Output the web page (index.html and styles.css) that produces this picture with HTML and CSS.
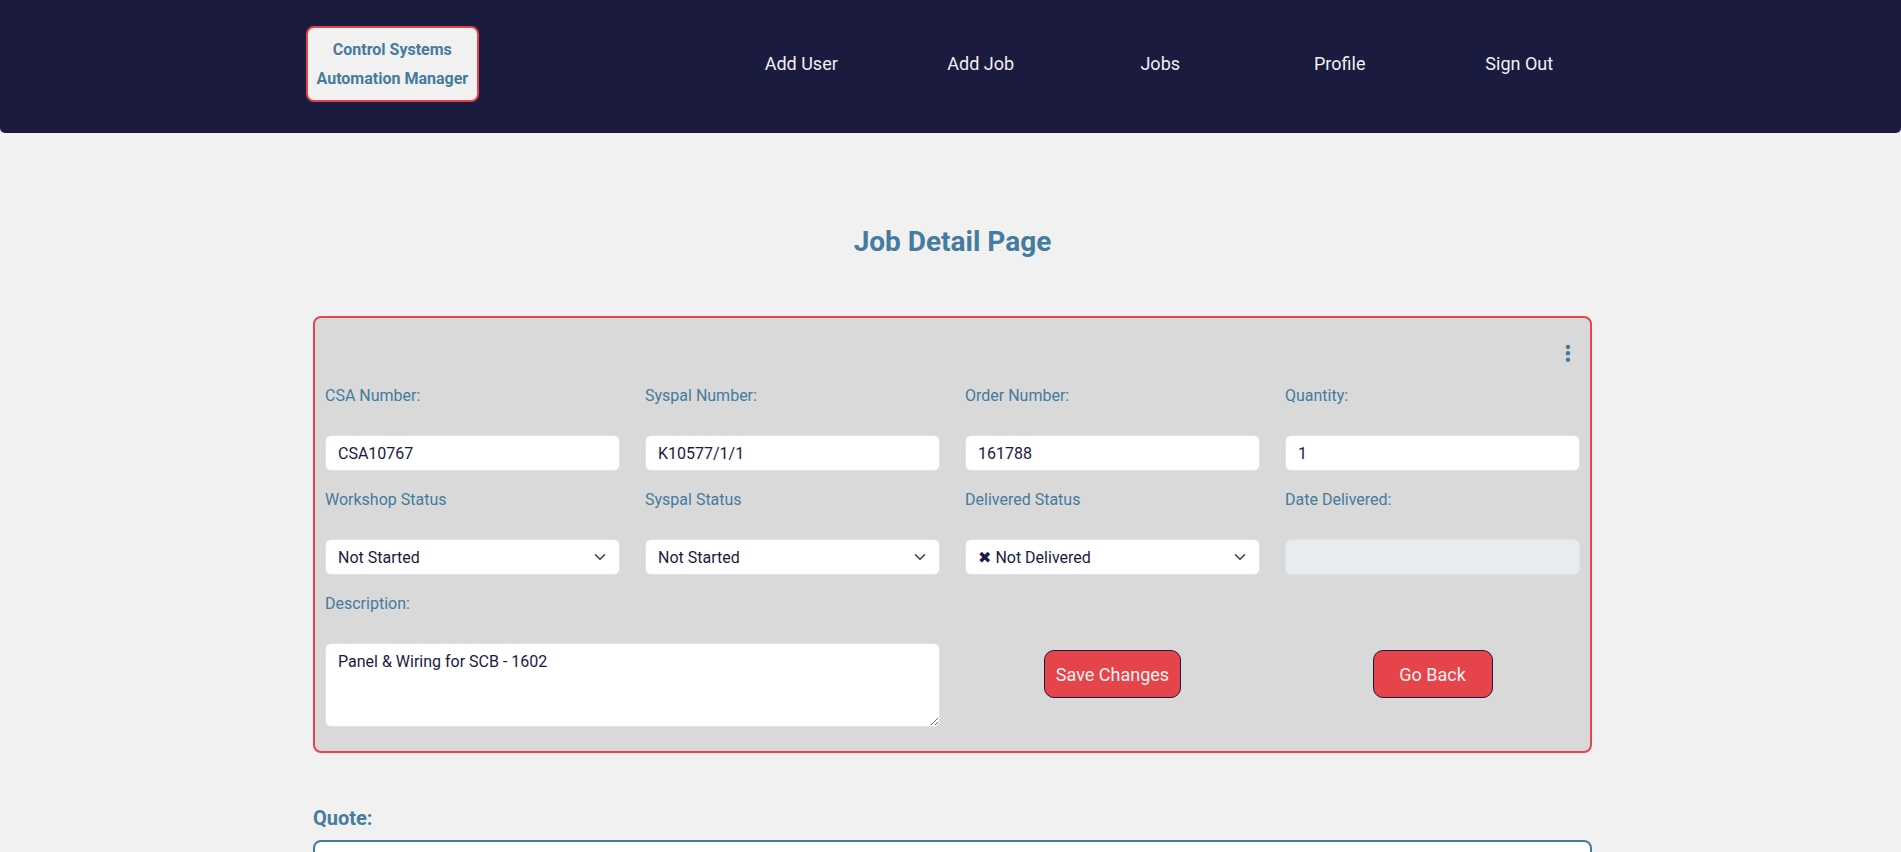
FILE: index.html
```html
<!DOCTYPE html>
<html lang="en">
<head>
<meta charset="utf-8">
<title>Job Detail Page</title>
<link rel="stylesheet" href="styles.css">
</head>
<body>
<nav class="navbar">
  <a class="brand" href="#">Control Systems<br>Automation Manager</a>
  <ul class="nav-links">
    <li><a href="#">Add User</a></li>
    <li><a href="#">Add Job</a></li>
    <li><a href="#">Jobs</a></li>
    <li><a href="#">Profile</a></li>
    <li><a href="#">Sign Out</a></li>
  </ul>
</nav>

<main class="page">
  <h1 class="page-title">Job Detail Page</h1>

  <section class="job-card">
    <div class="card-header">
      <svg class="kebab" width="6" height="18" viewBox="0 0 6 18" aria-hidden="true">
        <circle cx="3" cy="3" r="2.2" fill="#457b9d"/>
        <circle cx="3" cy="9.3" r="2.2" fill="#457b9d"/>
        <circle cx="3" cy="15.7" r="2.2" fill="#457b9d"/>
      </svg>
    </div>

    <div class="fields">
      <div class="field">
        <label class="field-label">CSA Number:</label>
        <input class="control" type="text" value="CSA10767">
      </div>
      <div class="field">
        <label class="field-label">Syspal Number:</label>
        <input class="control" type="text" value="K10577/1/1">
      </div>
      <div class="field">
        <label class="field-label">Order Number:</label>
        <input class="control" type="text" value="161788">
      </div>
      <div class="field">
        <label class="field-label">Quantity:</label>
        <input class="control" type="text" value="1">
      </div>

      <div class="field">
        <label class="field-label">Workshop Status</label>
        <div class="select-wrap">
          <select class="control select"><option>Not Started</option></select>
          <svg class="chevron" width="16" height="12" viewBox="0 0 16 16" aria-hidden="true"><path d="m2 5 6 6 6-6" fill="none" stroke="#343a40" stroke-width="2" stroke-linecap="round" stroke-linejoin="round"/></svg>
        </div>
      </div>
      <div class="field">
        <label class="field-label">Syspal Status</label>
        <div class="select-wrap">
          <select class="control select"><option>Not Started</option></select>
          <svg class="chevron" width="16" height="12" viewBox="0 0 16 16" aria-hidden="true"><path d="m2 5 6 6 6-6" fill="none" stroke="#343a40" stroke-width="2" stroke-linecap="round" stroke-linejoin="round"/></svg>
        </div>
      </div>
      <div class="field">
        <label class="field-label">Delivered Status</label>
        <div class="select-wrap">
          <select class="control select"><option>&#x2716; Not Delivered</option></select>
          <svg class="chevron" width="16" height="12" viewBox="0 0 16 16" aria-hidden="true"><path d="m2 5 6 6 6-6" fill="none" stroke="#343a40" stroke-width="2" stroke-linecap="round" stroke-linejoin="round"/></svg>
        </div>
      </div>
      <div class="field">
        <label class="field-label">Date Delivered:</label>
        <input class="control" type="text" value="" disabled>
      </div>

      <div class="field span-2">
        <label class="field-label">Description:</label>
        <textarea class="control textarea">Panel &amp; Wiring for SCB - 1602</textarea>
      </div>
      <div class="action">
        <button class="btn" type="button">Save Changes</button>
      </div>
      <div class="action">
        <button class="btn" type="button">Go Back</button>
      </div>
    </div>
  </section>

  <h3 class="section-title">Quote:</h3>
  <div class="quote-box"></div>
</main>
</body>
</html>
```

FILE: styles.css
```css
* {
  box-sizing: border-box;
}

html,
body {
  margin: 0;
  background: #f1f1f1;
}

body {
  font-family: Roboto, "Liberation Sans", Arial, sans-serif;
  color: #1b1a3f;
}

/* ---------- navbar ---------- */
.navbar {
  display: flex;
  align-items: center;
  justify-content: space-between;
  height: 133px;
  padding: 0 292px 5px 306px;
  background: #1b1a3f;
  border-radius: 0 0 5px 5px;
}

.brand {
  display: block;
  padding: 7px 8.5px;
  background: #f1f1f1;
  border: 2px solid #e5444b;
  border-radius: 8px;
  color: #457b9d;
  font-weight: 700;
  font-size: 16px;
  line-height: 29px;
  text-align: center;
  text-decoration: none;
}

.nav-links {
  display: flex;
  margin: 0;
  padding: 0;
  list-style: none;
}

.nav-links li {
  width: 179.5px;
  text-align: center;
}

.nav-links a {
  color: #f1f1f1;
  font-size: 18px;
  line-height: 22px;
  text-decoration: none;
}

/* ---------- page ---------- */
.page {
  width: 1279px;
  margin-left: 313px;
  padding-bottom: 40px;
}

.page-title {
  margin: 92px 0 58px;
  color: #457b9d;
  font-size: 28px;
  font-weight: 700;
  line-height: 33px;
  text-align: center;
}

/* ---------- card ---------- */
.job-card {
  padding: 10px 10px 24px;
  background: #d9d9d9;
  border: 2px solid #e5444b;
  border-radius: 8px;
}

.card-header {
  display: flex;
  justify-content: flex-end;
  align-items: flex-start;
  height: 58px;
}

.kebab {
  display: block;
  margin-top: 16px;
  margin-right: 9px;
}

.fields {
  display: grid;
  grid-template-columns: repeat(4, 1fr);
  column-gap: 25px;
  row-gap: 19px;
}

.field {
  display: flex;
  flex-direction: column;
}

.span-2 {
  grid-column: span 2;
}

.field-label {
  display: block;
  margin-bottom: 30px;
  color: #457b9d;
  font-size: 16px;
  line-height: 19px;
}

.control {
  display: block;
  width: 100%;
  height: 36px;
  padding: 0 12px;
  background: #fff;
  border: 1px solid #dee2e6;
  border-radius: 6px;
  color: #1b1a3f;
  font-family: Roboto, "DejaVu Sans", sans-serif;
  font-size: 16px;
  outline: none;
}

.control:disabled {
  background: #e9ecef;
}

.select-wrap {
  position: relative;
}

.select {
  appearance: none;
  -webkit-appearance: none;
  padding-right: 36px;
}

.chevron {
  position: absolute;
  right: 12px;
  top: 50%;
  margin-top: -6px;
  pointer-events: none;
}

.textarea {
  height: 84px;
  padding: 8px 12px;
  line-height: 19px;
  resize: vertical;
}

.action {
  display: flex;
  justify-content: center;
  align-items: flex-start;
  padding-top: 56px;
}

.btn {
  min-width: 120px;
  padding: 12.5px 11px;
  background: #e5444b;
  border: 1px solid #1b1a3f;
  border-radius: 10px;
  color: #f1f1f1;
  font-family: Roboto, sans-serif;
  font-size: 18px;
  line-height: 21px;
  cursor: pointer;
}

/* ---------- quote ---------- */
.section-title {
  margin: 54px 0 10px;
  color: #457b9d;
  font-size: 20px;
  font-weight: 700;
  line-height: 23px;
}

.quote-box {
  height: 200px;
  background: #fff;
  border: 2px solid #457b9d;
  border-radius: 8px;
}
```
